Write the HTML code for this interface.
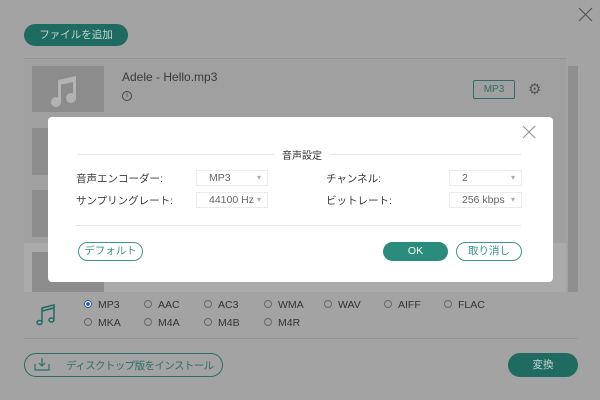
<!DOCTYPE html><html><head><meta charset="utf-8"><style>
*{margin:0;padding:0;box-sizing:border-box}
body{width:600px;height:400px;background:#a3a3a3;position:relative;overflow:hidden;font-family:"Liberation Sans","Noto Sans CJK JP",sans-serif;}
.a{position:absolute}
.th{position:absolute;left:32px;width:72px;background:#8c8c8c;}
.t{font-size:10.5px;color:#3a3a3a;position:absolute}
.rad{position:absolute;font-size:10.5px;color:#333}
.rad i{display:inline-block;width:8px;height:8px;border:1px solid #666;border-radius:50%;margin-right:6px;vertical-align:-0px}
.sel{position:absolute;height:16px;border:1px solid #ececec;font-size:10.5px;color:#666;padding-left:12px;line-height:14px}
.sel:after{content:"▾";position:absolute;right:6px;top:0;font-size:8px;color:#aaa}
</style></head><body>
<svg class="a" style="left:578px;top:7px" width="15" height="15"><path d="M1 1L14 14M14 1L1 14" stroke="#555" stroke-width="1.2"/></svg>
<div class="a" style="left:24px;top:24px;width:104px;height:22px;border-radius:11px;background:#1f6b62;color:#c2d6d2;font-size:10.5px;text-align:center;line-height:22px">ファイルを追加</div>
<div class="a" style="left:24px;top:58px;width:542px;height:234px;background:#a0a0a0;border-top:1px solid #939393"></div>
<div class="a" style="left:24px;top:243px;width:542px;height:49px;background:#ababab"></div>
<div class="a" style="left:568px;top:66px;width:10px;height:226px;background:#8f8f8f"></div>
<div class="th" style="top:66px;height:46px"></div>
<svg class="a" style="left:50px;top:72px" width="30" height="36" viewBox="0 0 30 36"><g fill="#b3b3b3"><path d="M8 8L26 4V27H23V10L11 12.5V31H8Z"/><circle cx="6" cy="30" r="5"/><circle cx="21" cy="26" r="5"/></g></svg>
<div class="th" style="top:128px;height:47px"></div>
<div class="th" style="top:190px;height:47px"></div>
<div class="th" style="top:252px;height:40px"></div>
<div class="t" style="left:122px;top:70px;font-size:12px">Adele - Hello.mp3</div>
<div class="a" style="left:122px;top:91px;width:10px;height:10px;border:1px solid #444;border-radius:50%;font-size:7px;text-align:center;line-height:8px;color:#444">i</div>
<div class="a" style="left:473px;top:80px;width:42px;height:19px;border:1px solid #2f6e66;border-radius:2px;font-size:10px;color:#2f6e66;text-align:center;line-height:17px">MP3</div>
<div class="a" style="left:528px;top:80px;font-size:15px;color:#555">⚙</div>
<div class="a" style="left:48px;top:117px;width:505px;height:165px;background:#fff;border-radius:4px">
<svg class="a" style="left:474px;top:8px" width="14" height="14"><path d="M1 1L13 13M13 1L1 13" stroke="#999" stroke-width="1.2"/></svg>
<div class="a" style="left:30px;top:37px;width:443px;height:1px;background:#e6e6e6"></div>
<div class="a" style="left:226px;top:30px;background:#fff;padding:0 8px;font-size:10px;color:#333">音声設定</div>
<div class="t" style="left:28px;top:54px">音声エンコーダー:</div>
<div class="t" style="left:28px;top:76px">サンプリングレート:</div>
<div class="t" style="left:278px;top:54px">チャンネル:</div>
<div class="t" style="left:278px;top:76px">ビットレート:</div>
<div class="sel" style="left:148px;top:53px;width:72px">MP3</div>
<div class="sel" style="left:148px;top:75px;width:72px">44100 Hz</div>
<div class="sel" style="left:401px;top:53px;width:73px">2</div>
<div class="sel" style="left:401px;top:75px;width:73px">256 kbps</div>
<div class="a" style="left:28px;top:108px;width:445px;height:1px;background:#e6e6e6"></div>
<div class="a" style="left:30px;top:125px;width:65px;height:19px;border:1px solid #3a9688;border-radius:10px;font-size:10.5px;color:#3a9688;text-align:center;line-height:17px">デフォルト</div>
<div class="a" style="left:335px;top:125px;width:65px;height:19px;background:#2a8c7d;border-radius:10px;font-size:10.5px;color:#fff;text-align:center;line-height:19px">OK</div>
<div class="a" style="left:408px;top:125px;width:66px;height:19px;border:1px solid #3a9688;border-radius:10px;font-size:10.5px;color:#3a9688;text-align:center;line-height:17px">取り消し</div>
</div>
<svg class="a" style="left:36px;top:303px" width="22" height="24" viewBox="0 0 22 24"><g fill="none" stroke="#1f6b62" stroke-width="1.5"><path d="M6 19V5l12-3v14"/><path d="M6 8l12-3"/><ellipse cx="3.5" cy="19.5" rx="2.5" ry="2"/><ellipse cx="15.5" cy="17" rx="2.5" ry="2"/></g></svg>
<div class="rad" style="left:84px;top:299px"><i style="border-color:#2f5fa0;background:radial-gradient(#2f5fa0 40%,#fff 50%)"></i>MP3</div>
<div class="rad" style="left:144px;top:299px"><i></i>AAC</div>
<div class="rad" style="left:204px;top:299px"><i></i>AC3</div>
<div class="rad" style="left:264px;top:299px"><i></i>WMA</div>
<div class="rad" style="left:324px;top:299px"><i></i>WAV</div>
<div class="rad" style="left:384px;top:299px"><i></i>AIFF</div>
<div class="rad" style="left:444px;top:299px"><i></i>FLAC</div>
<div class="rad" style="left:84px;top:317px"><i></i>MKA</div>
<div class="rad" style="left:144px;top:317px"><i></i>M4A</div>
<div class="rad" style="left:204px;top:317px"><i></i>M4B</div>
<div class="rad" style="left:264px;top:317px"><i></i>M4R</div>
<div class="a" style="left:24px;top:338px;width:554px;height:1px;background:#959595"></div>
<div class="a" style="left:24px;top:353px;width:199px;height:24px;border:1px solid #2f6e66;border-radius:12px"></div>
<svg class="a" style="left:34px;top:357px" width="16" height="14" viewBox="0 0 16 14"><g fill="none" stroke="#2f6e66" stroke-width="1.2"><path d="M1 7v6h14V7"/><path d="M8 1v8M5 6l3 3 3-3"/></g></svg>
<div class="a" style="left:66px;top:358px;font-size:10.5px;letter-spacing:-0.6px;color:#2f6e66">ディスクトップ版をインストール</div>
<div class="a" style="left:508px;top:353px;width:70px;height:24px;background:#1f6b62;border-radius:12px;color:#c2d6d2;font-size:10.5px;text-align:center;line-height:24px">変換</div>
</body></html>
